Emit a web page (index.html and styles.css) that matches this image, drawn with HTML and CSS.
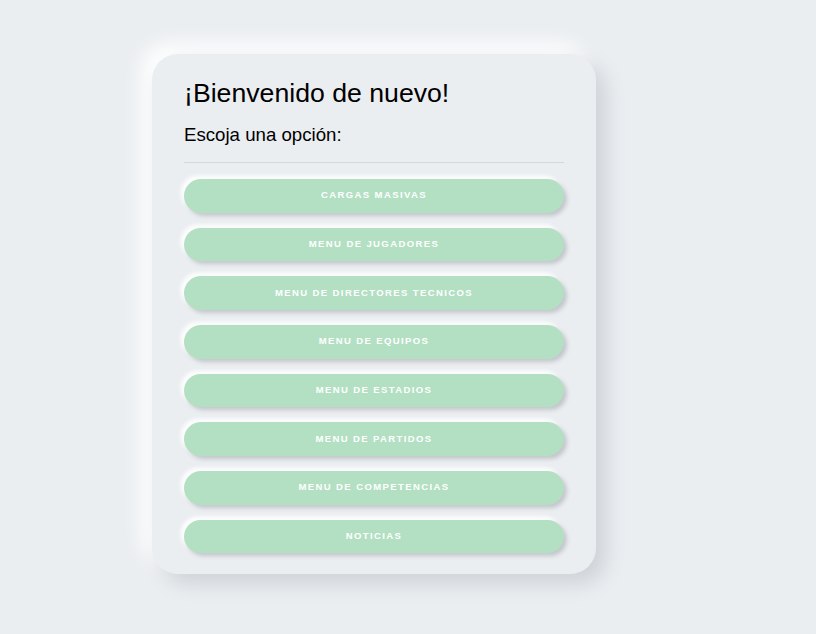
FILE: index.html
```html
<!DOCTYPE html>
<html lang="es">
<head>
<meta charset="utf-8">
<title>Menú</title>
<link rel="stylesheet" href="styles.css">
</head>
<body>
<main class="card">
  <h1 class="title">¡Bienvenido de nuevo!</h1>
  <h2 class="subtitle">Escoja una opción:</h2>
  <hr class="divider">
  <nav class="menu">
    <a class="btn" href="#">Cargas masivas</a>
    <a class="btn" href="#">Menu de jugadores</a>
    <a class="btn" href="#">Menu de directores tecnicos</a>
    <a class="btn" href="#">Menu de equipos</a>
    <a class="btn" href="#">Menu de estadios</a>
    <a class="btn" href="#">Menu de partidos</a>
    <a class="btn" href="#">Menu de competencias</a>
    <a class="btn" href="#">Noticias</a>
  </nav>
</main>
</body>
</html>
```

FILE: styles.css
```css
html, body {
  margin: 0;
  background: #ebeef1;
}
body {
  padding: 54px 0 0 152px;
  font-family: "Liberation Sans", Arial, sans-serif;
  color: #000;
  min-height: 634px;
  box-sizing: border-box;
}
.card {
  width: 444px;
  box-sizing: border-box;
  padding: 23px 32px 21px 32px;
  background: #ebeef1;
  border-radius: 26px;
  box-shadow: 10px 10px 20px #cfd2d7, -10px -10px 20px #ffffff;
}
.title {
  margin: 0 0 14.5px 0;
  font-size: 26.67px;
  font-weight: 400;
  line-height: 1.2;
}
.subtitle {
  margin: 0;
  font-size: 18.67px;
  font-weight: 400;
  line-height: 1.2;
}
.divider {
  margin: 16px 0 16px 0;
  border: 0;
  border-top: 1px solid #d4d7db;
  height: 0;
}
.menu {
  display: flex;
  flex-direction: column;
  gap: 15px;
}
.btn {
  display: flex;
  align-items: center;
  justify-content: center;
  height: 33.7px;
  box-sizing: border-box;
  padding-bottom: 2px;
  border-radius: 17px;
  background: #b3e0c3;
  color: #fff;
  text-decoration: none;
  text-transform: uppercase;
  font-size: 9.5px;
  font-weight: 700;
  letter-spacing: 1.4px;
  box-shadow: 3px 3px 4px #c3c6cb, -3px -3px 4px #ffffff;
}
```
